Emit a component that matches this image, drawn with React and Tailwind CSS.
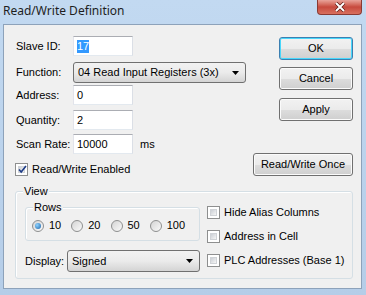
import React from 'react';

const ui = { fontFamily: '"Liberation Sans", Arial, sans-serif' };

function TextBox({ value, selected, className = '' }) {
  return (
    <div className={`h-[20px] bg-white border border-[#abadb3] border-r-[#dbdfe6] border-b-[#e3e9ef] border-l-[#e2e3ea] flex items-center px-[3px] ${className}`}>
      {selected ? (
        <span className="bg-[#3399ff] text-white leading-[13px]">{value}</span>
      ) : (
        <span className="leading-[13px]">{value}</span>
      )}
    </div>
  );
}

function Combo({ value, className = '' }) {
  return (
    <div className={`h-[21px] rounded-[3px] border border-[#707070] bg-gradient-to-b from-[#f2f2f2] via-[#ebebeb] to-[#d4d4d4] flex items-center pl-[4px] pr-[6px] ${className}`}>
      <span className="flex-1 leading-[13px]">{value}</span>
      <svg width="7" height="4" viewBox="0 0 7 4"><path d="M0 0h7L3.5 4z" fill="#000" /></svg>
    </div>
  );
}

function Button({ children, def, className = '' }) {
  return (
    <div
      className={`h-[23px] rounded-[3px] border flex items-center justify-center bg-[linear-gradient(to_bottom,#f2f2f2_0%,#ebebeb_50%,#dddddd_51%,#cfcfcf_100%)] ${
        def ? 'border-[#3c7fb1] shadow-[inset_0_0_0_1px_#48d7fb]' : 'border-[#707070] shadow-[inset_0_0_0_1px_#fbfbfb]'
      } ${className}`}
    >
      {children}
    </div>
  );
}

function Check({ checked, label }) {
  return (
    <div className="flex items-center gap-[4px] whitespace-nowrap">
      <div className="w-[13px] h-[13px] shrink-0 border border-[#8e8f8f] bg-white p-[2px]">
        <div className="w-full h-full bg-gradient-to-br from-[#cbcfd5] to-[#f6f6f6] border border-[#d0d3d7] relative">
          {checked && (
            <svg className="absolute -left-[1px] -top-[2px]" width="9" height="9" viewBox="0 0 9 9">
              <path d="M1 4.5l2.2 2.6L8 1" fill="none" stroke="#1d3b86" strokeWidth="1.6" />
            </svg>
          )}
        </div>
      </div>
      <span className="leading-[13px]">{label}</span>
    </div>
  );
}

function Radio({ checked, label }) {
  return (
    <div className="flex items-center gap-[5px]">
      <div className="w-[12px] h-[12px] rounded-full border border-[#8e8f8f] bg-gradient-to-br from-[#d4d4d4] to-[#fafafa] flex items-center justify-center">
        {checked && <div className="w-[6px] h-[6px] rounded-full bg-[radial-gradient(circle_at_35%_35%,#8fd3ff,#1c63a8)]" />}
      </div>
      <span className="leading-[13px]">{label}</span>
    </div>
  );
}

function Row({ label, children, className = '' }) {
  return (
    <div className={`flex items-center ${className}`}>
      <span className="w-[57px] leading-[13px]">{label}</span>
      {children}
    </div>
  );
}

export default function App() {
  return (
    <div className="w-[366px] h-[295px] bg-gradient-to-b from-[#c2d9f1] to-[#b5cde8] text-[11px] text-black" style={ui}>
      <div className="h-[24px] flex items-start justify-between">
        <span className="pl-[3px] pt-[2px] text-[12px] text-[#1e1e1e]" style={{ fontFamily: '"Noto Sans", "Open Sans", sans-serif' }}>
          Read/Write Definition
        </span>
        <div className="mr-[4px] w-[45px] h-[15px] rounded-b-[4px] border border-t-0 border-[#8a3a33] bg-gradient-to-b from-[#e8a39a] via-[#c7493d] to-[#d8705f] flex items-center justify-center">
          <svg width="12" height="10" viewBox="0 0 12 10">
            <path d="M2 1l8 8M10 1l-8 8" stroke="#5a1a14" strokeWidth="3.4" />
            <path d="M2 1l8 8M10 1l-8 8" stroke="#fff" strokeWidth="2" />
          </svg>
        </div>
      </div>
      <div className="ml-[3px] w-[359px] h-[265px] bg-[#f0f0f0] border border-[#8da2ba] pl-[11px] pr-[8px]">
        <div className="flex h-[153px]">
          <div className="flex-1 flex flex-col pl-[1px]">
            <Row label="Slave ID:" className="mt-[11px]">
              <TextBox value="17" selected className="w-[60px]" />
            </Row>
            <Row label="Function:" className="mt-[6px]">
              <Combo value="04 Read Input Registers (3x)" className="w-[173px]" />
            </Row>
            <Row label="Address:" className="mt-[2px]">
              <TextBox value="0" className="w-[60px]" />
            </Row>
            <Row label="Quantity:" className="mt-[5px]">
              <TextBox value="2" className="w-[60px]" />
            </Row>
            <Row label="Scan Rate:" className="mt-[4px]">
              <TextBox value="10000" className="w-[60px]" />
              <span className="ml-[7px] leading-[13px]">ms</span>
            </Row>
            <div className="mt-[9px] -ml-[1px]">
              <Check checked label="Read/Write Enabled" />
            </div>
          </div>
          <div className="w-[100px] flex flex-col items-end">
            <Button def className="w-[74px] mt-[12px]">OK</Button>
            <Button className="w-[74px] mt-[7px]">Cancel</Button>
            <Button className="w-[74px] mt-[8px]">Apply</Button>
            <Button className="w-[100px] mt-[32px]">Read/Write Once</Button>
          </div>
        </div>
        <div className="relative mt-[13px] h-[88px] rounded-[3px] border border-[#d5dfe5] shadow-[inset_1px_1px_0_#fff] px-[9px] pt-[15px]">
          <span className="absolute left-[7px] -top-[7px] bg-[#f0f0f0] px-[1px] leading-[13px]">View</span>
          <div className="flex">
            <div className="w-[175px] shrink-0 flex flex-col">
              <div className="relative h-[34px] rounded-[3px] border border-[#d5dfe5] shadow-[inset_1px_1px_0_#fff] flex items-center gap-[10px] pl-[6px] pt-[3px]">
                <span className="absolute left-[7px] -top-[7px] bg-[#f0f0f0] px-[1px] leading-[13px]">Rows</span>
                <Radio checked label="10" />
                <Radio label="20" />
                <Radio label="50" />
                <Radio label="100" />
              </div>
              <div className="flex items-center mt-[9px]">
                <span className="w-[42px] leading-[13px]">Display:</span>
                <Combo value="Signed" className="w-[133px] h-[22px]" />
              </div>
            </div>
            <div className="ml-[7px] flex flex-col gap-[11px] -mt-[1px]">
              <Check label="Hide Alias Columns" />
              <Check label="Address in Cell" />
              <Check label="PLC Addresses (Base 1)" />
            </div>
          </div>
        </div>
      </div>
    </div>
  );
}
